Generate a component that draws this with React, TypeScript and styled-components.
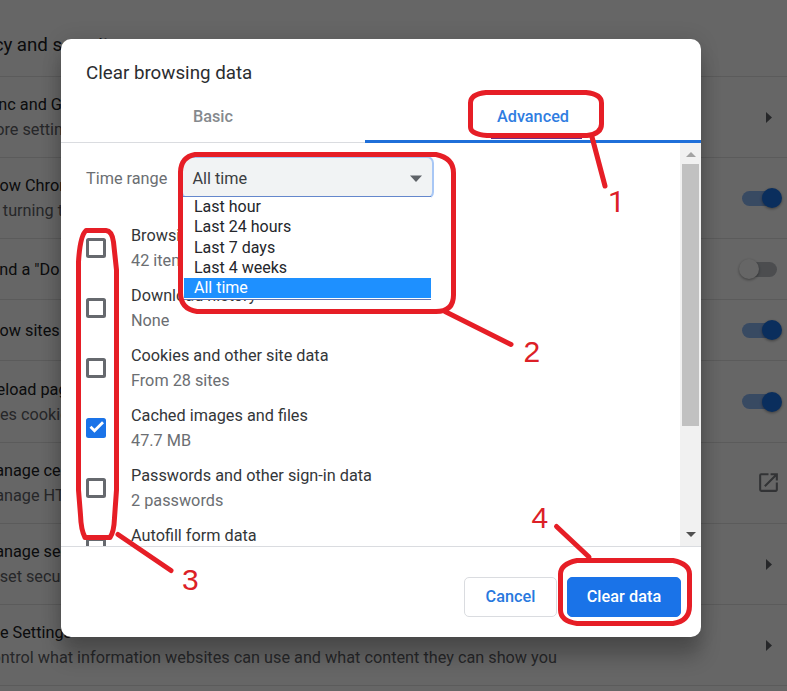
import React from "react";
import styled, { createGlobalStyle } from "styled-components";

const GlobalStyle = createGlobalStyle`
  *, *::before, *::after { box-sizing: border-box; }
  html, body { margin: 0; padding: 0; height: 100%; overflow: hidden; }
  body { font-family: Roboto, sans-serif; font-size: 16.25px; line-height: 25px; background: #fff; }
`;

const Screen = styled.div`
  position: relative;
  width: 787px;
  height: 691px;
  overflow: hidden;
  background: #fff;
`;

const Settings = styled.main`
  color: #202124;
`;

const SettingsHeading = styled.h2`
  display: flex;
  align-items: center;
  height: 76px;
  margin: 0 0 0 -48px;
  padding-top: 14px;
  font-size: 18.75px;
  font-weight: 400;
  letter-spacing: -0.05px;
  white-space: nowrap;
`;

const SettingsRow = styled.section<{ $height: number }>`
  display: flex;
  align-items: center;
  justify-content: space-between;
  height: ${(p) => p.$height}px;
  border-top: 1px solid #e4e4e4;
  padding-right: 5px;
`;

const RowText = styled.div`
  margin-left: -19px;
  white-space: nowrap;
`;

const RowDetail = styled.div`
  color: #5f6368;
`;

const Arrow = styled.svg`
  width: 6px;
  height: 11px;
  margin-right: 10px;
  fill: #5f6368;
`;

const OpenIcon = styled.svg`
  width: 25px;
  height: 25px;
  margin-right: 1px;
  margin-top: -2px;
  fill: #7d8185;
`;

const Toggle = styled.span<{ $on: boolean }>`
  position: relative;
  width: 35px;
  height: 15px;
  margin-right: 5px;
  border-radius: 8px;
  background: ${(p) => (p.$on ? "#8db8f6" : "#bdc1c6")};
  &::after {
    content: "";
    position: absolute;
    top: -2.5px;
    left: ${(p) => (p.$on ? 19.5 : -3)}px;
    width: 20px;
    height: 20px;
    border-radius: 50%;
    background: ${(p) => (p.$on ? "#1a73e8" : "#fff")};
    box-shadow: 0 1px 3px rgba(0, 0, 0, 0.4);
  }
`;

const Backdrop = styled.div`
  position: absolute;
  inset: 0;
  background: rgba(0, 0, 0, 0.6);
`;

const Dialog = styled.div`
  position: absolute;
  left: 61px;
  top: 39px;
  width: 640px;
  height: 598px;
  display: flex;
  flex-direction: column;
  border-radius: 10px;
  overflow: hidden;
  background: #fff;
  color: #333639;
  box-shadow: 0 0 20px rgba(0, 0, 0, 0.12), 0 20px 20px rgba(0, 0, 0, 0.24);
`;

const Title = styled.h1`
  margin: 0;
  padding: 22px 25px 0;
  height: 53px;
  font-size: 18.75px;
  font-weight: 400;
  color: #2b2d30;
`;

const Tabs = styled.div`
  display: grid;
  grid-template-columns: 304px 336px;
  height: 51px;
  border-bottom: 1px solid #dadce0;
`;

const Tab = styled.button<{ $active?: boolean }>`
  height: ${(p) => (p.$active ? 51 : 50)}px;
  border: 0;
  border-bottom: ${(p) => (p.$active ? "3px solid #1f6fd9" : "0")};
  padding: 0 0 ${(p) => (p.$active ? 0 : 2)}px;
  background: none;
  font: 500 16.25px/25px Roboto, sans-serif;
  color: ${(p) => (p.$active ? "#2f7de1" : "#85898d")};
`;

const Content = styled.div`
  display: flex;
  height: 403px;
`;

const Options = styled.div`
  flex: 1;
  overflow: hidden;
  padding: 14px 0 0 25px;
`;

const TimeRange = styled.div`
  display: flex;
  align-items: center;
  height: 42px;
  color: #6b6e72;
`;

const SelectWrap = styled.div`
  position: relative;
  margin-left: auto;
  margin-right: 247px;
  width: 250px;
  height: 42px;
  padding-top: 1px;
`;

const SelectBox = styled.div`
  display: flex;
  align-items: center;
  justify-content: space-between;
  width: 249px;
  height: 39px;
  padding: 1px 10px 0 9.5px;
  background: #f1f3f4;
  border-radius: 5px;
  box-shadow: 0 0 0 2px #a8c7f5;
  color: #3a3d41;
`;

const Caret = styled.svg`
  width: 12px;
  height: 7px;
  fill: #5f6368;
`;

const Menu = styled.ul`
  position: absolute;
  left: 0;
  top: 39px;
  width: 248px;
  height: 104px;
  margin: 0;
  padding: 0 0 0 1px;
  list-style: none;
  background: #fff;
  border-top: 1px solid #6487cc;
  border-bottom: 1px solid #6475b0;
`;

const MenuItem = styled.li<{ $selected?: boolean }>`
  height: 20.25px;
  padding-left: 10px;
  font-size: 16px;
  line-height: 20.5px;
  color: ${(p) => (p.$selected ? "#fff" : "#24262b")};
  background: ${(p) => (p.$selected ? "#1e90ff" : "transparent")};
`;

const List = styled.div`
  padding-top: 24px;
`;

const DataRow = styled.div`
  display: flex;
  height: 60px;
`;

const Checkbox = styled.span<{ $checked?: boolean }>`
  flex: none;
  display: flex;
  width: 20px;
  height: 20px;
  margin: 15px 25px 0 0;
  border-radius: 2.5px;
  border: ${(p) => (p.$checked ? "0" : "3px solid #66696e")};
  background: ${(p) => (p.$checked ? "#1a73e8" : "#fff")};
`;

const DataText = styled.div`
  white-space: nowrap;
`;

const Muted = styled.div`
  color: #6b6e72;
`;

const Scrollbar = styled.div`
  display: flex;
  flex-direction: column;
  align-items: center;
  width: 21px;
  background: #f1f1f1;
`;

const Thumb = styled.div`
  flex: none;
  width: 17px;
  height: 262px;
  margin-bottom: 106px;
  background: #c1c1c1;
`;

const ScrollArrow = styled.svg<{ $dim?: boolean }>`
  flex: none;
  width: 10px;
  height: 5px;
  margin: ${(p) => (p.$dim ? "9px 0 7px" : "0")};
  fill: ${(p) => (p.$dim ? "#a3a3a3" : "#505050")};
`;

const Footer = styled.div`
  display: flex;
  justify-content: flex-end;
  gap: 10px;
  height: 91px;
  padding: 30px 20px 0;
  border-top: 1px solid #dadce0;
`;

const Button = styled.button<{ $primary?: boolean }>`
  width: ${(p) => (p.$primary ? 114 : 93)}px;
  height: 40px;
  padding: 0 0 1px;
  border-radius: 5px;
  border: 1px solid ${(p) => (p.$primary ? "#1a73e8" : "#dadce0")};
  background: ${(p) => (p.$primary ? "#1a73e8" : "#fff")};
  color: ${(p) => (p.$primary ? "#fff" : "#2878de")};
  font: 500 16.25px/25px Roboto, sans-serif;
  letter-spacing: 0.05px;
`;

const Marks = styled.svg`
  position: absolute;
  inset: 0;
  fill: none;
  stroke: #e61e26;
  stroke-width: 5;
  stroke-linecap: round;
  stroke-linejoin: round;
`;

const MarkNumber = styled.text<{ $plain?: boolean }>`
  fill: #dc2027;
  stroke: none;
  font: 30px ${(p) => (p.$plain ? "Roboto" : '"Liberation Sans", Arial')}, sans-serif;
`;

type Control = "arrow" | "on" | "off" | "open";

const settings: { title: string; detail?: string; height: number; control: Control }[] = [
  { title: "Sync and Google", detail: "More settings", height: 81, control: "arrow" },
  { title: "Allow Chrome", detail: "By turning this", height: 81, control: "on" },
  { title: 'Send a "Do Not', height: 61, control: "off" },
  { title: "Allow sites to", height: 61, control: "on" },
  { title: "Preload pages", detail: "Uses cookies", height: 82, control: "on" },
  { title: "Manage certs", detail: "Manage HTTPS", height: 81, control: "open" },
  { title: "Manage security", detail: "Reset security", height: 81, control: "arrow" },
  {
    title: "Site Settings",
    detail: "Control what information websites can use and what content they can show you",
    height: 81,
    control: "arrow",
  },
];

const data = [
  ["Browsing history", "42 items"],
  ["Download history", "None"],
  ["Cookies and other site data", "From 28 sites"],
  ["Cached images and files", "47.7 MB"],
  ["Passwords and other sign-in data", "2 passwords"],
  ["Autofill form data", ""],
];

const ranges = ["Last hour", "Last 24 hours", "Last 7 days", "Last 4 weeks", "All time"];

function RowControl({ kind }: { kind: Control }) {
  if (kind === "arrow")
    return (
      <Arrow viewBox="0 0 6 11">
        <path d="M0 0 6 5.5 0 11z" />
      </Arrow>
    );
  if (kind === "open")
    return (
      <OpenIcon viewBox="0 0 24 24">
        <path d="M19 19H5V5h7V3H5a2 2 0 0 0-2 2v14a2 2 0 0 0 2 2h14c1.1 0 2-.9 2-2v-7h-2v7zM14 3v2h3.59l-9.83 9.83 1.41 1.41L19 6.41V10h2V3h-7z" />
      </OpenIcon>
    );
  return <Toggle $on={kind === "on"} />;
}

export default function App() {
  return (
    <Screen>
      <GlobalStyle />
      <Settings>
        <SettingsHeading>Privacy and security</SettingsHeading>
        {settings.map((s) => (
          <SettingsRow key={s.title} $height={s.height}>
            <RowText>
              {s.title}
              {s.detail && <RowDetail>{s.detail}</RowDetail>}
            </RowText>
            <RowControl kind={s.control} />
          </SettingsRow>
        ))}
        <SettingsRow $height={61} />
      </Settings>
      <Backdrop />
      <Dialog role="dialog">
        <Title>Clear browsing data</Title>
        <Tabs>
          <Tab>Basic</Tab>
          <Tab $active>Advanced</Tab>
        </Tabs>
        <Content>
          <Options>
            <TimeRange>
              Time range
              <SelectWrap>
                <SelectBox>
                  All time
                  <Caret viewBox="0 0 12 7">
                    <path d="M0 .5h12L6 7z" />
                  </Caret>
                </SelectBox>
                <Menu>
                  {ranges.map((r) => (
                    <MenuItem key={r} $selected={r === "All time"}>
                      {r}
                    </MenuItem>
                  ))}
                </Menu>
              </SelectWrap>
            </TimeRange>
            <List>
              {data.map(([name, detail]) => {
                const checked = name.startsWith("Cached");
                return (
                  <DataRow key={name}>
                    <Checkbox $checked={checked}>
                      {checked && (
                        <svg width="20" height="20" viewBox="0 0 20 20">
                          <path d="M4.5 8.800 8.500 12.800 17 4.300" fill="none" stroke="#fff" strokeWidth="2.8" />
                        </svg>
                      )}
                    </Checkbox>
                    <DataText>
                      {name}
                      <Muted>{detail}</Muted>
                    </DataText>
                  </DataRow>
                );
              })}
            </List>
          </Options>
          <Scrollbar>
            <ScrollArrow $dim viewBox="0 0 10 5">
              <path d="M0 5 5 0l5 5z" />
            </ScrollArrow>
            <Thumb />
            <ScrollArrow viewBox="0 0 10 5">
              <path d="M0 0h10L5 5z" />
            </ScrollArrow>
          </Scrollbar>
        </Content>
        <Footer>
          <Button>Cancel</Button>
          <Button $primary>Clear data</Button>
        </Footer>
      </Dialog>
      <Marks width="787" height="691" viewBox="0 0 787 691">
        <path d="M491 138.5h91" stroke="#6b2f86" strokeWidth="1" strokeLinecap="butt" />
        <path d="M486 92.5H586Q601.500 94 601.500 103V124Q601.500 134 587 135.500H487Q470.500 134 470.500 127V103Q470.500 94 486 92.500z" />
        <path d="M592 137 605 186" />
        <path d="M195 154.500H436Q453.500 158 453.500 173V295Q453.500 311.500 436 311.500H197Q180.500 309 180.500 293V172Q181 157 195 154.500z" />
        <path d="M445 311.500 511 344.500" />
        <path d="M86 230.500H106Q112 231 113.500 242L116.500 270V490L114.500 518Q114 532 110 537.500H85Q81 530 80.500 515L78.500 490V262Q80 236 86 230.500z" />
        <path d="M118 534.500 171 570.500" />
        <path d="M577 560.500H673Q689.500 564 689.500 574V606Q689.500 621 673 623.500H577Q560.500 621 560.500 610V574Q560.500 564 577 560.500z" />
        <path d="M556.500 526.500 589 557" />
        <MarkNumber $plain x="608" y="212">1</MarkNumber>
        <MarkNumber x="523.500" y="362">2</MarkNumber>
        <MarkNumber x="182" y="590">3</MarkNumber>
        <MarkNumber x="531.500" y="528">4</MarkNumber>
      </Marks>
    </Screen>
  );
}
